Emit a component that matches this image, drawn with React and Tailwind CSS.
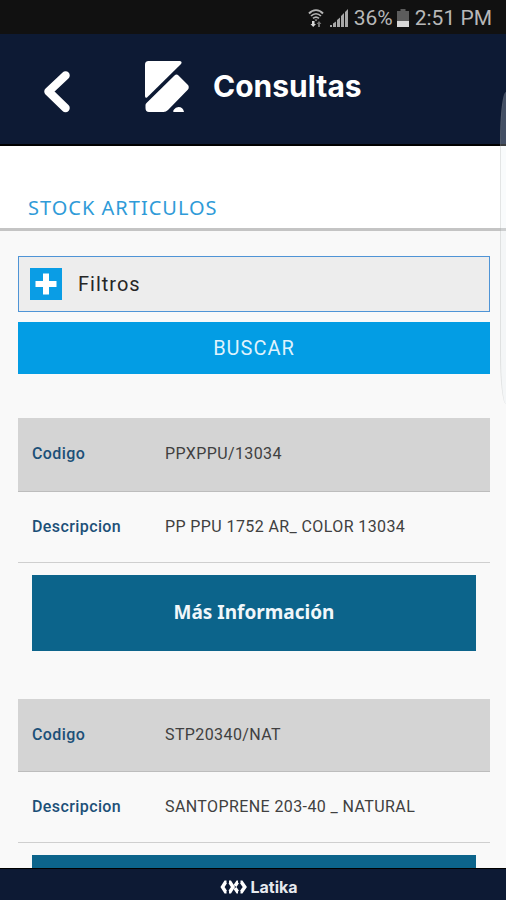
const articles = [
  { code: "PPXPPU/13034", description: "PP PPU 1752 AR_ COLOR 13034" },
  { code: "STP20340/NAT", description: "SANTOPRENE 203-40 _ NATURAL" },
];

function WifiIcon() {
  return (
    <svg className="h-5 w-4" viewBox="0 0 16 20" fill="none" stroke="#b4b4b4" aria-hidden="true">
      <path d="M1 5.500C5 1 11 1 15 5.500" strokeWidth="1.900" />
      <path d="M3 8C6 5 10 5 13 8" strokeWidth="1.700" />
      <path d="M5 10.300C7 8.600 9 8.600 11 10.300" strokeWidth="1.700" />
      <path d="M6.500 11.500h3L8 13.300z" fill="#b4b4b4" stroke="none" />
      <path d="M4 13h2.500v3H8L5.200 19L2.500 16H4z" fill="#d8d8d8" stroke="none" />
      <path d="M10 19v-3H8.600l2.400-3 2.400 3H12v3z" fill="#777" stroke="none" />
    </svg>
  );
}

function SignalIcon() {
  return (
    <svg className="h-5 w-[18px]" viewBox="0 0 18 20" fill="#a8a8a8" aria-hidden="true">
      <path d="M0 17h2v2H0zM3 15.500l3-2V19H3zM7 12l3-2.500V19H7zM11 8l3-3V19h-3zM15 4l3-3V19h-3z" />
    </svg>
  );
}

function BatteryIcon() {
  return (
    <svg className="h-5 w-3" viewBox="0 0 12 20" aria-hidden="true">
      <path d="M3.500 1h5v2H12v10H0V3h3.500z" fill="#5c5c5c" />
      <path d="M0 13h12v6H0z" fill="#d8d8d8" />
    </svg>
  );
}

function StatusBar() {
  return (
    <div className="flex h-[34px] shrink-0 items-center justify-end bg-[#111111] pr-3.5 pt-px font-['Roboto',sans-serif] text-[21px] leading-6 text-[#b8b8b8]">
      <WifiIcon />
      <span className="ml-1.5 flex">
        <SignalIcon />
      </span>
      <span className="ml-1.5">36%</span>
      <span className="ml-1 flex">
        <BatteryIcon />
      </span>
      <span className="ml-1.5">2:51 PM</span>
    </div>
  );
}

function Header() {
  return (
    <header className="flex h-28 shrink-0 items-center border-b-2 border-black bg-[#0d1a34] pl-[43px]">
      <button type="button" aria-label="Volver" className="flex h-12 w-7 items-end justify-center">
        <svg className="h-[42px] w-[26px]" viewBox="0 0 26 42" fill="none" aria-hidden="true">
          <path d="M21.500 4.500L4.500 20.500L21.500 37" stroke="#fff" strokeWidth="8.500" strokeLinecap="round" strokeLinejoin="round" />
        </svg>
      </button>
      <div className="flex items-center pb-1.5 pl-[74px]">
        <svg className="h-[51px] w-11" viewBox="0 0 44 51" fill="#fff" aria-hidden="true">
          <path d="M3.500 0H35Q37.500 0.500 36 3L2 36.500Q0 37.500 0 35V3.500Q0 0 3.500 0Z" />
          <path d="M29.500 14.500Q31.500 12.500 33.500 14.500L43 24Q44.500 26 43 28.500L23 49Q21 51 18.500 51H4Q0.500 51 0.500 47V44Q0.500 43 1.500 42Z" />
          <path d="M28.500 51Q27.500 50 29 48.500Q30.500 46 33.500 46Q38 46 39 51Z" />
        </svg>
        <h1 className="ml-6 font-['Inter',sans-serif] text-[30px] font-bold leading-9 text-white">Consultas</h1>
      </div>
    </header>
  );
}

function ArticleCard({ article }) {
  return (
    <article>
      <table className="w-full border-collapse text-left text-base tracking-wide">
        <tbody>
          <tr className="h-[73px] border-b border-[#bdbdbd] bg-[#d4d4d4]">
            <th scope="row" className="w-[147px] pl-3.5 font-medium text-[#1c5078]">
              Codigo
            </th>
            <td className="text-[#404040]">{article.code}</td>
          </tr>
          <tr className="h-[71px] border-b border-[#cfcfcf]">
            <th scope="row" className="w-[147px] pl-3.5 font-medium text-[#1c5078]">
              Descripcion
            </th>
            <td className="text-[#404040]">{article.description}</td>
          </tr>
        </tbody>
      </table>
      <div className="px-3.5 pt-3">
        <button
          type="button"
          className="h-[76px] w-full bg-[#0c648b] font-['Noto_Sans',sans-serif] text-[19px] font-bold text-[#f1f7fa]"
        >
          Más Información
        </button>
      </div>
    </article>
  );
}

export default function App() {
  return (
    <div className="relative flex h-dvh flex-col overflow-hidden bg-[#f9f9f9] font-['Roboto',sans-serif]">
      <StatusBar />
      <Header />
      <div className="h-[85px] shrink-0 border-b-[3px] border-[#c4c4c4] bg-white pl-7 pt-12">
        <h2 className="font-['Noto_Sans',sans-serif] text-xl leading-7 tracking-wider text-[#2f9bd8]">STOCK ARTICULOS</h2>
      </div>
      <main className="min-h-0 flex-1 overflow-y-auto pl-[18px] pr-4 pt-[25px] [scrollbar-width:none]">
        <button
          type="button"
          className="flex h-14 w-full items-center border border-[#4f94d6] bg-[#ededed] pl-[11px] text-xl tracking-wider text-[#262626]"
        >
          <svg className="mr-4 h-8 w-8" viewBox="0 0 32 32" aria-hidden="true">
            <path d="M0 0h32v32H0z" fill="#0a9de5" />
            <path d="M13 5.500h6V13h7.500v6H19v7.500h-6V19H5.500v-6H13z" fill="#fff" />
          </svg>
          Filtros
        </button>
        <button type="button" className="mt-2.5 h-[52px] w-full bg-[#039de4] text-xl tracking-wider text-[#dff2fc]">
          BUSCAR
        </button>
        <div className="mt-11 flex flex-col gap-12">
          {articles.map((article) => (
            <ArticleCard key={article.code} article={article} />
          ))}
        </div>
      </main>
      <footer className="flex h-8 shrink-0 items-center justify-center gap-0.5 border-t border-black bg-[#0d1a34] pt-1 pl-3">
        <svg className="h-3.5 w-7" viewBox="0 0 28 14" fill="none" stroke="#fff" strokeWidth="3.500" aria-hidden="true">
          <path d="M6.500 2.200H5.500L2.500 7L5.500 11.800H6.500" />
          <path d="M9 2.200H10L13 7L10 11.800H9" />
          <path d="M18 2.200H17.500L15 6" />
          <path d="M15 8L17.500 11.800H18" />
          <path d="M20.500 2.200H21.500L24.800 7L21.500 11.800H20.500" />
        </svg>
        <span className="font-['Inter',sans-serif] text-base font-bold leading-5 text-[#e6e9ee]">Latika</span>
      </footer>
      <div className="pointer-events-none absolute right-0 top-[92px] h-[312px] w-1.5 rounded-l-[6px_50px] border-l border-[#8c8c8c]/20 bg-[#e8eef5]/25" />
    </div>
  );
}
